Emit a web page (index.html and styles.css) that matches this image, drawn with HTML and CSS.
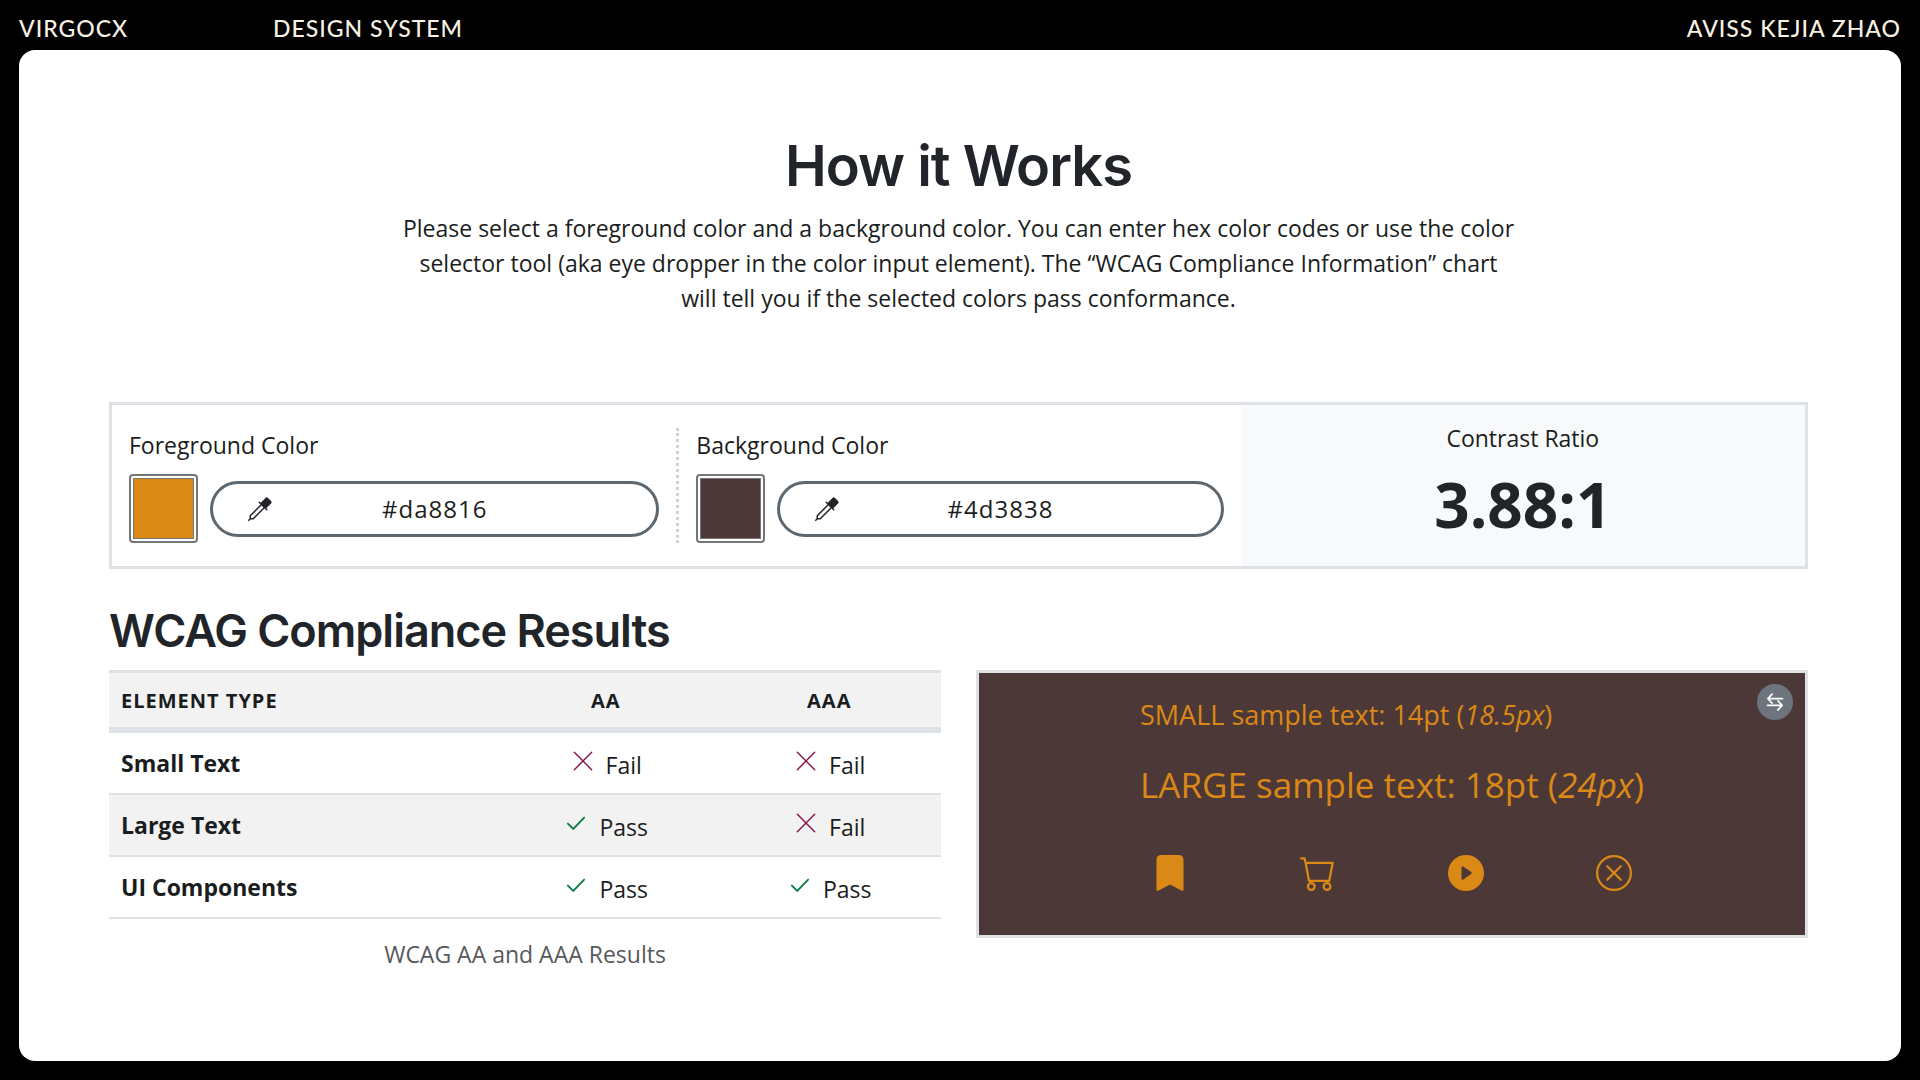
FILE: index.html
```html
<!DOCTYPE html>
<html lang="en">
<head>
    <meta charset="UTF-8">
    <meta name="viewport" content="width=device-width, initial-scale=1.0">
    <title>How it Works</title>
    <link rel="stylesheet" href="styles.css">
</head>
<body>

<!-- shared icons -->
<svg class="sprite" aria-hidden="true">
    <symbol id="eyedropper" viewBox="0 0 16 16">
        <path d="M13.354.646a1.207 1.207 0 0 0-1.708 0L8.5 3.793l-.646-.647a.5.5 0 1 0-.708.708L8.293 5l-7.147 7.146A.5.5 0 0 0 1 12.5v1.793l-.854.853a.5.5 0 1 0 .708.707L1.707 15H3.5a.5.5 0 0 0 .354-.146L11 7.707l1.146 1.147a.5.5 0 0 0 .708-.708l-.647-.646 3.147-3.146a1.207 1.207 0 0 0 0-1.708zM2 12.707l7-7L10.293 7l-7 7H2z"/>
    </symbol>
    <symbol id="fail" viewBox="0 0 24 24">
        <path d="M4 4l16 16M20 4L4 20" fill="none" stroke="currentColor" stroke-width="1.3" stroke-linecap="round"/>
    </symbol>
    <symbol id="pass" viewBox="0 0 24 24">
        <path d="M4.500 12.500l5 5L19.500 7" fill="none" stroke="currentColor" stroke-width="1.7" stroke-linecap="round" stroke-linejoin="round"/>
    </symbol>
</svg>

<header class="topbar">
    <span class="brand">VIRGOCX</span>
    <span class="project">DESIGN SYSTEM</span>
    <span class="author">AVISS KEJIA ZHAO</span>
</header>

<main class="page">
    <section class="intro">
        <h1>How it Works</h1>
        <p>Please select a foreground color and a background color. You can enter hex color codes or use the color selector tool (aka eye dropper in the color input element). The “WCAG Compliance Information” chart will tell you if the selected colors pass conformance.</p>
    </section>

    <section class="picker">
        <div class="picker-col">
            <label for="fgHex">Foreground Color</label>
            <div class="picker-row">
                <input type="color" class="swatch" id="fgSwatch" value="#da8816" aria-label="Foreground swatch">
                <div class="hex">
                    <svg class="hex-icon"><use href="#eyedropper"/></svg>
                    <input type="text" id="fgHex" value="#da8816">
                </div>
            </div>
        </div>
        <div class="picker-col">
            <label for="bgHex">Background Color</label>
            <div class="picker-row">
                <input type="color" class="swatch" id="bgSwatch" value="#4d3838" aria-label="Background swatch">
                <div class="hex">
                    <svg class="hex-icon"><use href="#eyedropper"/></svg>
                    <input type="text" id="bgHex" value="#4d3838">
                </div>
            </div>
        </div>
        <div class="ratio">
            <div>Contrast Ratio</div>
            <div class="ratio-value">3.88:1</div>
        </div>
    </section>

    <h2>WCAG Compliance Results</h2>
    <section class="results">
        <table>
            <caption>WCAG AA and AAA Results</caption>
            <thead>
                <tr>
                    <th class="type-col">ELEMENT TYPE</th>
                    <th>AA</th>
                    <th>AAA</th>
                </tr>
            </thead>
            <tbody>
                <tr>
                    <th>Small Text</th>
                    <td><span class="result fail"><svg><use href="#fail"/></svg>Fail</span></td>
                    <td><span class="result fail"><svg><use href="#fail"/></svg>Fail</span></td>
                </tr>
                <tr>
                    <th>Large Text</th>
                    <td><span class="result pass"><svg><use href="#pass"/></svg>Pass</span></td>
                    <td><span class="result fail"><svg><use href="#fail"/></svg>Fail</span></td>
                </tr>
                <tr>
                    <th>UI Components</th>
                    <td><span class="result pass"><svg><use href="#pass"/></svg>Pass</span></td>
                    <td><span class="result pass"><svg><use href="#pass"/></svg>Pass</span></td>
                </tr>
            </tbody>
        </table>

        <div class="preview">
            <button type="button" class="swap" aria-label="Swap colors">
                <svg viewBox="0 0 24 24"><path d="M21 8H4M8.500 2.500L3.500 8l5 5.500M3 16h17M15.500 10.500l5 5.500-5 5.500"/></svg>
            </button>
            <div class="sample">
                <p class="small-sample">SMALL sample text: 14pt (<em>18.5px</em>)</p>
                <p class="large-sample">LARGE sample text: 18pt (<em>24px</em>)</p>
                <div class="sample-icons">
                    <svg viewBox="0 0 16 16"><path d="M2 15.5V2a2 2 0 0 1 2-2h8a2 2 0 0 1 2 2v13.500a.5.5 0 0 1-.74.439L8 13.069l-5.260 2.870A.5.5 0 0 1 2 15.500z"/></svg>
                    <svg viewBox="0 0 16 16"><path d="M0 1.500A.5.5 0 0 1 .5 1H2a.5.5 0 0 1 .485.379L2.890 3H14.500a.5.5 0 0 1 .491.592l-1.500 8A.5.5 0 0 1 13 12H4a.5.5 0 0 1-.491-.408L2.010 3.607 1.610 2H.5a.5.5 0 0 1-.5-.5zM3.102 4l1.313 7h8.170l1.313-7H3.102zM5 12a2 2 0 1 0 0 4 2 2 0 0 0 0-4zm7 0a2 2 0 1 0 0 4 2 2 0 0 0 0-4zm-7 1a1 1 0 1 1 0 2 1 1 0 0 1 0-2zm7 0a1 1 0 1 1 0 2 1 1 0 0 1 0-2z"/></svg>
                    <svg viewBox="0 0 16 16"><path d="M16 8A8 8 0 1 1 0 8a8 8 0 0 1 16 0zM6.790 5.093A.5.5 0 0 0 6 5.500v5a.5.5 0 0 0 .79.407l3.500-2.500a.5.5 0 0 0 0-.814l-3.500-2.500z"/></svg>
                    <svg viewBox="0 0 16 16"><path d="M8 15A7 7 0 1 1 8 1a7 7 0 0 1 0 14zm0 1A8 8 0 1 0 8 0a8 8 0 0 0 0 16z"/><path d="M4.646 4.646a.5.5 0 0 1 .708 0L8 7.293l2.646-2.647a.5.5 0 0 1 .708.708L8.707 8l2.647 2.646a.5.5 0 0 1-.708.708L8 8.707l-2.646 2.647a.5.5 0 0 1-.708-.708L7.293 8 4.646 5.354a.5.5 0 0 1 0-.708z"/></svg>
                </div>
            </div>
        </div>
    </section>
</main>

</body>
</html>
```
FILE: styles.css
```css
* {
    box-sizing: border-box;
}
body {
    margin: 0;
    padding: 0 19px 19px;
    min-height: 100vh;
    display: flex;
    flex-direction: column;
    background: #000;
    color: #1a1d20;
    font-family: "Open Sans", "Noto Sans", sans-serif;
    font-size: 23px;
    line-height: 35px;
}
h1, h2, p {
    margin: 0;
}
.sprite {
    display: none;
}
.topbar {
    display: flex;
    height: 50px;
    padding-top: 8px;
    line-height: 40px;
    color: #f7f1e3;
    font-family: Lato, sans-serif;
    font-size: 23px;
    font-weight: 500;
    letter-spacing: 1px;
}
.brand {
    width: 254px;
}
.author {
    margin-left: auto;
}
.page {
    flex: 1;
    padding: 81px 93px 0 90px;
    background: #fff;
    border-radius: 16px;
}
.intro {
    max-width: 1116px;
    margin: 0 auto 86px;
    text-align: center;
}
h1 {
    margin-bottom: 10px;
    color: #212529;
    font-family: Inter, sans-serif;
    font-size: 56px;
    font-weight: 600;
    line-height: 70px;
    letter-spacing: -1px;
}

.picker {
    display: grid;
    grid-template-columns: repeat(3, 1fr);
    border: 3px solid #dee2e6;
}
.picker-col {
    margin: 23px 0;
    padding: 0 17px;
}
.picker-col + .picker-col {
    border-left: 3px dotted #ced4da;
}
.picker-col label {
    display: block;
    margin-bottom: 11px;
}
.picker-row {
    display: flex;
    align-items: center;
    gap: 12px;
}
.swatch {
    width: 69px;
    height: 69px;
    padding: 0;
    background: #fff;
    border: 2px solid #767676;
    border-radius: 4px;
}
.swatch::-webkit-color-swatch-wrapper {
    padding: 2px;
}
.swatch::-webkit-color-swatch {
    border: 1px solid #777;
}
.hex {
    position: relative;
    flex: 1;
}
.hex input {
    display: block;
    width: 100%;
    height: 56px;
    padding: 0 38px;
    border: 3px solid #5c6770;
    border-radius: 28px;
    background: #fff;
    color: inherit;
    font: inherit;
    font-size: 24px;
    letter-spacing: 1px;
    text-align: center;
}
.hex-icon {
    position: absolute;
    top: 16px;
    left: 38px;
    width: 24px;
    height: 24px;
    fill: #212529;
}
.ratio {
    padding: 16px 16px 8px;
    background: #f8f9fb;
    text-align: center;
}
.ratio-value {
    color: #212529;
    font-size: 62px;
    font-weight: 700;
    line-height: 96px;
}

h2 {
    margin: 33px 0 11px;
    color: #212529;
    font-family: Inter, sans-serif;
    font-size: 45px;
    font-weight: 600;
    line-height: 57px;
    letter-spacing: -1px;
}
.results {
    display: grid;
    grid-template-columns: 1fr 1fr;
    gap: 35px;
    align-items: start;
}
table {
    width: 100%;
    table-layout: fixed;
    border-collapse: separate;
    border-spacing: 0;
}
caption {
    caption-side: bottom;
    padding-top: 18px;
    color: #55595c;
}
th, td {
    height: 62px;
    padding: 0 12px;
    border-bottom: 2px solid #dee2e6;
    text-align: center;
}
th:first-child {
    text-align: left;
}
thead th {
    height: 63px;
    border-top: 3px solid #dee2e6;
    border-bottom: 6px solid #dee2e6;
    background: #f2f2f2;
    font-size: 20px;
    letter-spacing: 1px;
}
.type-col {
    width: 385px;
}
tbody tr:nth-child(even) {
    background: #f2f2f2;
}
.result {
    display: flex;
    justify-content: center;
    gap: 10px;
    padding-top: 4px;
}
.result svg {
    width: 26px;
    height: 26px;
}
.fail svg {
    color: #84134a;
}
.pass svg {
    color: #0a7a43;
}

.preview {
    position: relative;
    display: flex;
    justify-content: center;
    height: 268px;
    padding-top: 22px;
    border: 3px solid #dee2e6;
    background: #4d3838;
    color: #da8816;
}
.swap {
    position: absolute;
    top: 11px;
    right: 12px;
    display: flex;
    align-items: center;
    justify-content: center;
    width: 36px;
    height: 36px;
    padding: 0;
    border: 0;
    border-radius: 50%;
    background: #6c757d;
}
.swap svg {
    width: 20px;
    height: 20px;
    fill: none;
    stroke: #fff;
    stroke-width: 2;
    stroke-linecap: round;
    stroke-linejoin: round;
}
.small-sample {
    margin-bottom: 24px;
    font-size: 27px;
    line-height: 40px;
}
.large-sample {
    margin-bottom: 44px;
    font-size: 35px;
    line-height: 52px;
}
.sample-icons {
    display: flex;
    justify-content: space-between;
    padding: 0 12px;
}
.sample-icons svg {
    width: 36px;
    height: 36px;
    fill: currentColor;
}
```
